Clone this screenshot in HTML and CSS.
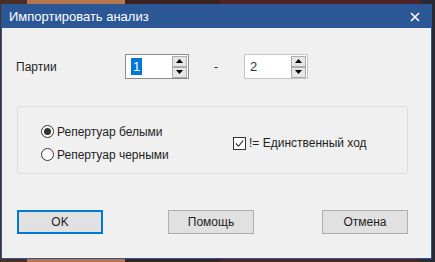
FILE: index.html
```html
<!DOCTYPE html>
<html lang="ru">
<head>
  <meta charset="UTF-8">
  <title>Импортировать анализ</title>
  <link rel="stylesheet" href="styles.css">
</head>
<body>
  <div class="window">
    <div class="titlebar">
      <span class="title">Импортировать анализ</span>
      <svg class="close" viewBox="0 0 10 10" width="10" height="10">
        <path d="M1,1 L9,9 M9,1 L1,9" stroke="#fff" stroke-width="1.6"/>
      </svg>
    </div>
    <div class="content">
      <div class="range-row">
        <span class="label">Партии</span>
        <div class="spin spin-focus">
          <span class="value"><span class="selected">1</span></span>
          <div class="spin-buttons">
            <span class="spin-btn"><svg viewBox="0 0 7 4" width="7" height="4"><path d="M0,4 L3.5,0 L7,4 Z"/></svg></span>
            <span class="spin-btn"><svg viewBox="0 0 7 4" width="7" height="4"><path d="M0,0 L3.5,4 L7,0 Z"/></svg></span>
          </div>
        </div>
        <span class="dash">-</span>
        <div class="spin">
          <span class="value">2</span>
          <div class="spin-buttons">
            <span class="spin-btn"><svg viewBox="0 0 7 4" width="7" height="4"><path d="M0,4 L3.5,0 L7,4 Z"/></svg></span>
            <span class="spin-btn"><svg viewBox="0 0 7 4" width="7" height="4"><path d="M0,0 L3.5,4 L7,0 Z"/></svg></span>
          </div>
        </div>
      </div>

      <div class="group">
        <div class="radios">
          <label class="option"><span class="radio checked"></span>Репертуар белыми</label>
          <label class="option"><span class="radio"></span>Репертуар черными</label>
        </div>
        <label class="option">
          <span class="checkbox">
            <svg viewBox="0 0 12 12" width="11" height="11">
              <path d="M2,6 L5,9 L10,2.5" fill="none" stroke="#333" stroke-width="1.2"/>
            </svg>
          </span>!= Единственный ход
        </label>
      </div>

      <div class="buttons">
        <button class="btn btn-default">OK</button>
        <button class="btn">Помощь</button>
        <button class="btn btn-last">Отмена</button>
      </div>
    </div>
  </div>
</body>
</html>
```

FILE: styles.css
```css
body {
  margin: 0;
  width: 435px;
  height: 262px;
  overflow: hidden;
  font-family: "Liberation Sans", Arial, sans-serif;
  font-size: 12px;
  color: #1e1e1e;
  background: linear-gradient(to right, #4b2e26 0, #4b2e26 27px, #b8764e 27px, #b8764e 125px, #3a2222 125px, #3a2222 220px, #4e2428 220px, #4e2428 420px, #2a2a36 420px);
}

.window {
  box-sizing: border-box;
  width: 431px;
  height: 255px;
  margin: 4px 0 0 1px;
  border: 1px solid #2b5797;
  display: flex;
  flex-direction: column;
}

.titlebar {
  height: 23px;
  flex: none;
  background: #2b5797;
  color: #fff;
  display: flex;
  align-items: center;
  justify-content: space-between;
  padding: 0 11px 0 7px;
}

.title {
  font-size: 13px;
}

.close {
  display: block;
}

.content {
  flex: 1;
  background: #f0f0f0;
  padding-left: 14px;
}

.range-row {
  display: flex;
  align-items: center;
  height: 25px;
  margin-top: 26px;
}

.label {
  width: 109px;
}

.dash {
  width: 30px;
  padding-left: 25px;
}

.spin {
  box-sizing: border-box;
  width: 64px;
  height: 25px;
  background: #fff;
  border: 1px solid #c4c4c4;
  display: flex;
  align-items: center;
  justify-content: space-between;
  padding: 0 1px 0 5px;
}

.spin-focus {
  border-color: #8c8c8c;
}

.value {
  font-size: 13px;
  color: #333;
}

.selected {
  background: #0078d7;
  color: #fff;
  padding: 1px 2px;
}

.spin-buttons {
  display: flex;
  flex-direction: column;
}

.spin-btn {
  box-sizing: border-box;
  width: 15px;
  height: 11px;
  background: #e6e6e6;
  border: 1px solid #acacac;
  display: flex;
  align-items: center;
  justify-content: center;
}

.spin-btn svg {
  display: block;
  fill: #000;
}

.group {
  box-sizing: border-box;
  width: 391px;
  height: 68px;
  margin: 27px 0 0 1px;
  border: 1px solid #dcdcdc;
  border-radius: 3px;
  display: flex;
  align-items: center;
  padding: 6px 0 0 23px;
}

.radios {
  width: 192px;
  display: flex;
  flex-direction: column;
  gap: 7px;
}

.option {
  display: flex;
  align-items: center;
  height: 16px;
}

.radio {
  box-sizing: border-box;
  width: 13px;
  height: 13px;
  border: 1px solid #333;
  border-radius: 50%;
  background: #fff;
  margin-right: 3px;
  display: flex;
  align-items: center;
  justify-content: center;
}

.radio.checked::after {
  content: "";
  width: 7px;
  height: 7px;
  border-radius: 50%;
  background: #333;
}

.checkbox {
  box-sizing: border-box;
  width: 13px;
  height: 13px;
  border: 1px solid #333;
  background: #fff;
  margin-right: 3px;
  display: flex;
  align-items: center;
  justify-content: center;
}

.checkbox svg {
  display: block;
}

.buttons {
  display: flex;
  width: 391px;
  margin: 36px 0 0 1px;
  gap: 65px;
}

.btn {
  box-sizing: border-box;
  width: 86px;
  height: 24px;
  background: #e1e1e1;
  border: 1px solid #adadad;
  font-family: inherit;
  font-size: 12px;
  color: #1e1e1e;
  padding: 0;
}

.btn-default {
  border: 2px solid #0078d7;
}

.btn-last {
  margin-left: auto;
}
```
